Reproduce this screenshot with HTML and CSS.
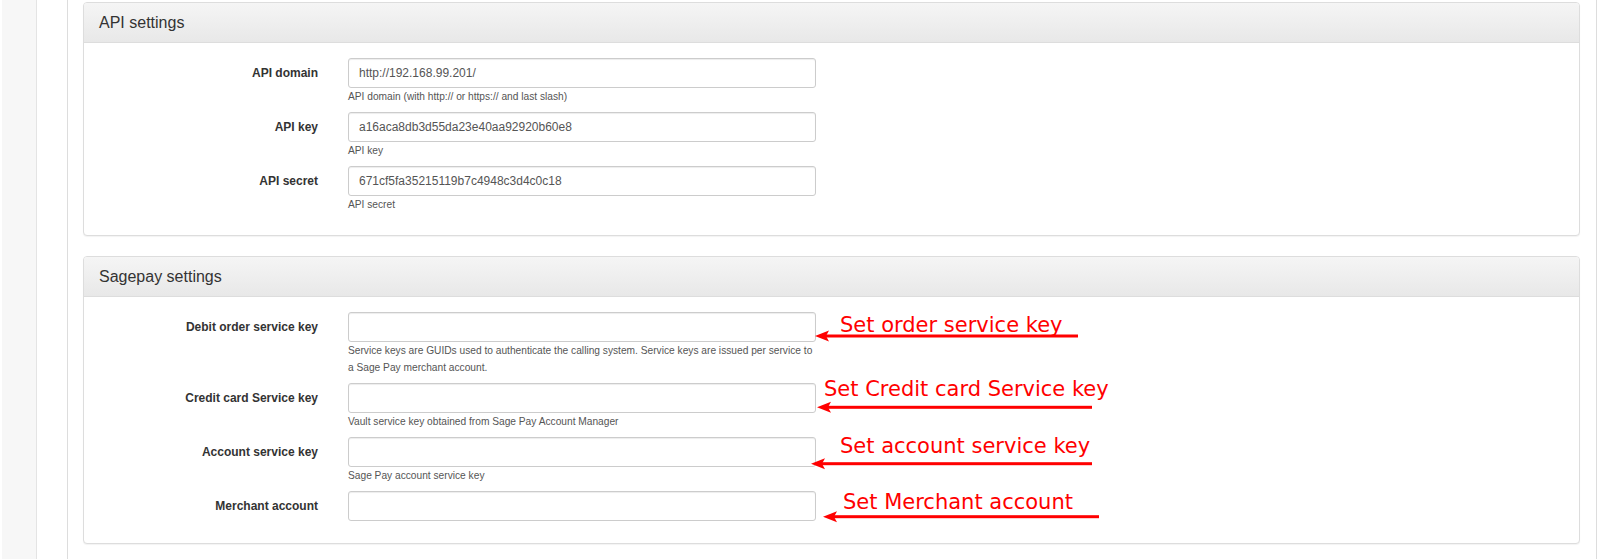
FILE: index.html
```html
<!DOCTYPE html>
<html lang="en">
<head>
<meta charset="utf-8">
<title>Settings</title>
<link rel="stylesheet" href="styles.css">
</head>
<body>
<div class="page">
  <div class="rail"></div>
  <div class="gutter"></div>
  <main class="main">
    <section class="panel">
      <header class="panel-heading">API settings</header>
      <div class="panel-body">
        <div class="form-row">
          <label class="form-label">API domain</label>
          <div class="form-field">
            <input class="form-input" type="text" value="http://192.168.99.201/">
            <p class="help">API domain (with http:// or https:// and last slash)</p>
          </div>
        </div>
        <div class="form-row">
          <label class="form-label">API key</label>
          <div class="form-field">
            <input class="form-input" type="text" value="a16aca8db3d55da23e40aa92920b60e8">
            <p class="help">API key</p>
          </div>
        </div>
        <div class="form-row">
          <label class="form-label">API secret</label>
          <div class="form-field">
            <input class="form-input" type="text" value="671cf5fa35215119b7c4948c3d4c0c18">
            <p class="help">API secret</p>
          </div>
        </div>
      </div>
    </section>
    <section class="panel">
      <header class="panel-heading">Sagepay settings</header>
      <div class="panel-body">
        <div class="form-row">
          <label class="form-label">Debit order service key</label>
          <div class="form-field">
            <input class="form-input" type="text" value="">
            <p class="help">Service keys are GUIDs used to authenticate the calling system. Service keys are issued per service to a Sage Pay merchant account.</p>
          </div>
        </div>
        <div class="form-row">
          <label class="form-label">Credit card Service key</label>
          <div class="form-field">
            <input class="form-input" type="text" value="">
            <p class="help">Vault service key obtained from Sage Pay Account Manager</p>
          </div>
        </div>
        <div class="form-row">
          <label class="form-label">Account service key</label>
          <div class="form-field">
            <input class="form-input" type="text" value="">
            <p class="help">Sage Pay account service key</p>
          </div>
        </div>
        <div class="form-row">
          <label class="form-label">Merchant account</label>
          <div class="form-field">
            <input class="form-input" type="text" value="">
          </div>
        </div>
      </div>
    </section>
  </main>
  <div class="edge"></div>

  <svg class="arrows" width="1604" height="559" viewBox="0 0 1604 559" aria-hidden="true">
    <g fill="#ff0000" stroke="none">
      <rect x="825" y="334.5" width="253" height="3"/>
      <polygon points="815,336 829,330.5 826,336 829,341.5"/>
      <rect x="827" y="405.8" width="265" height="3"/>
      <polygon points="817,407.3 831,401.8 828,407.3 831,412.8"/>
      <rect x="821" y="462.2" width="271" height="3"/>
      <polygon points="811,463.7 825,458.2 822,463.7 825,469.2"/>
      <rect x="833" y="515.2" width="266" height="3"/>
      <polygon points="823,516.7 837,511.2 834,516.7 837,522.2"/>
    </g>
  </svg>
  <span class="note note-1">Set order service key</span>
  <span class="note note-2">Set Credit card Service key</span>
  <span class="note note-3">Set account service key</span>
  <span class="note note-4">Set Merchant account</span>
</div>
</body>
</html>
```

FILE: styles.css
```css
html, body {
  margin: 0;
  padding: 0;
  background: #ffffff;
}

body {
  font-family: "Liberation Sans", Arial, sans-serif;
  color: #333333;
}

.page {
  position: relative;
  display: flex;
  width: 1604px;
  height: 559px;
  overflow: hidden;
  padding-left: 2px;
  box-sizing: border-box;
}

.rail {
  flex: none;
  width: 34px;
  background: #f7f7f7;
  border-right: 1px solid #e4e4e4;
}

.gutter {
  flex: none;
  width: 30px;
  background: #ffffff;
  border-right: 1px solid #dddddd;
}

.main {
  flex: 1;
  padding: 2px 16px 0 15px;
  min-width: 0;
}

.edge {
  flex: none;
  width: 7px;
  border-left: 1px solid #dddddd;
}

.panel {
  border: 1px solid #dddddd;
  border-radius: 4px;
  background: #ffffff;
  box-shadow: 0 1px 1px rgba(0, 0, 0, 0.05);
  margin-bottom: 20px;
}

.panel-heading {
  height: 40px;
  box-sizing: border-box;
  padding: 0 15px;
  display: flex;
  align-items: center;
  font-size: 16px;
  color: #333333;
  background: linear-gradient(to bottom, #f5f5f5 0%, #e8e8e8 100%);
  border-bottom: 1px solid #dddddd;
  border-radius: 3px 3px 0 0;
}

.panel-body {
  padding: 15px 15px 15px;
}

.form-row {
  display: flex;
  align-items: flex-start;
  margin-bottom: 7px;
}

.form-label {
  flex: none;
  width: 219px;
  margin-right: 30px;
  text-align: right;
  font-weight: bold;
  font-size: 12px;
  line-height: 30px;
  color: #333333;
}

.form-field {
  flex: none;
  width: 468px;
}

.form-input {
  display: block;
  box-sizing: border-box;
  width: 100%;
  height: 30px;
  margin: 0;
  padding: 5px 10px;
  font-family: "Liberation Sans", Arial, sans-serif;
  font-size: 12px;
  color: #555555;
  background: #ffffff;
  border: 1px solid #cccccc;
  border-radius: 3px;
  box-shadow: inset 0 1px 1px rgba(0, 0, 0, 0.075);
  outline: none;
}

.help {
  margin: 0;
  font-size: 10.2px;
  line-height: 17px;
  color: #555555;
}

.arrows {
  position: absolute;
  left: 0;
  top: 0;
  pointer-events: none;
}

.note {
  position: absolute;
  font-family: "DejaVu Sans", sans-serif;
  font-size: 21px;
  line-height: normal;
  color: #ff0000;
  white-space: nowrap;
}

.note-1 { left: 840px; top: 312.8px; }
.note-2 { left: 824px; top: 377.2px; }
.note-3 { left: 840px; top: 433.8px; }
.note-4 { left: 843px; top: 489.5px; }
```
